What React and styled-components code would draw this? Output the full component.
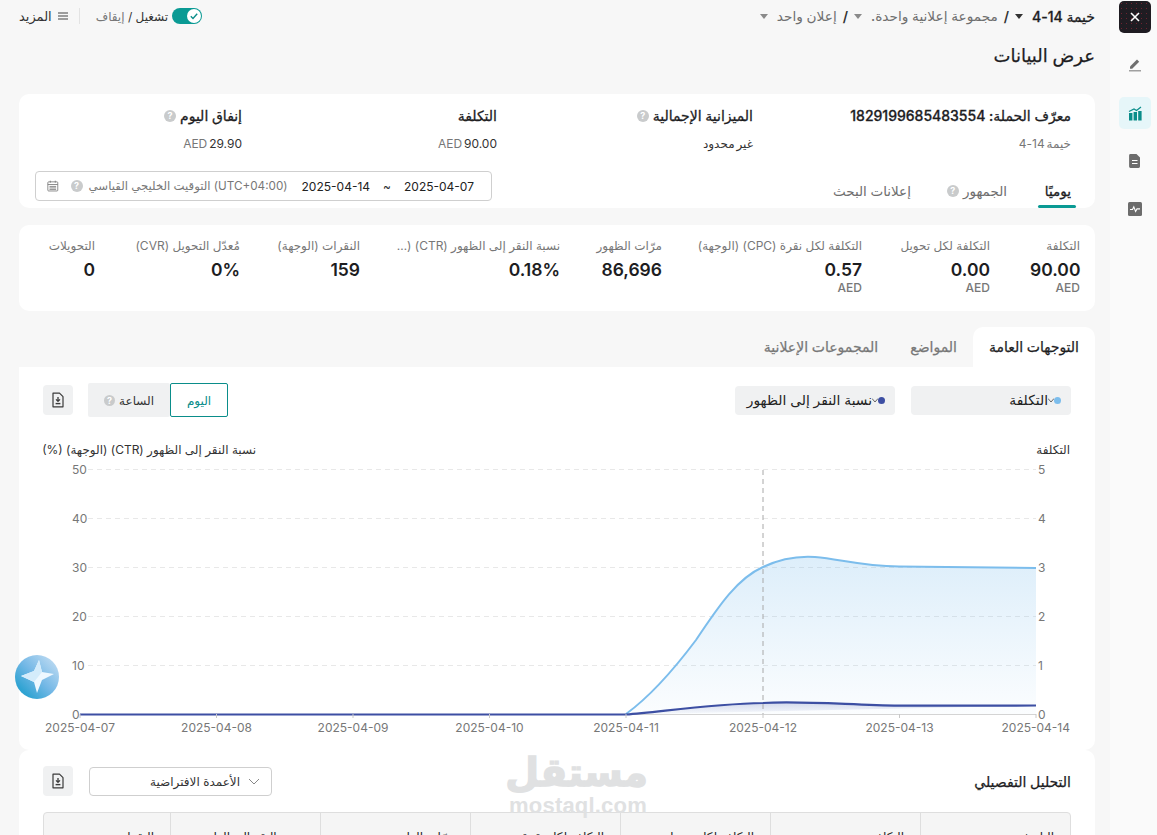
import React from 'react';
import styled, { createGlobalStyle } from 'styled-components';

const Global = createGlobalStyle`
  html, body { margin: 0; padding: 0; height: 835px; overflow: hidden; background: #f7f7f7; }
  body { font-family: Inter, "Noto Sans", "DejaVu Sans", sans-serif; color: #1d1d1f; }
  * { box-sizing: border-box; }
`;
const Shell = styled.div`
  direction: rtl; display: flex; width: 1157px; height: 835px; overflow: hidden; position: relative;
`;
const Side = styled.aside`
  width: 47px; flex: none; background: #fafafa; padding: 1px 6px 0 9px;
  display: flex; flex-direction: column; align-items: center;
`;
const CloseBtn = styled.button`
  width: 32px; height: 32px; border: 0; border-radius: 5px; padding: 0; display: grid; place-items: center;
  background-color: #1f1c22;
  background-image: radial-gradient(#6e2230 0.6px, transparent 0.8px);
  background-size: 5px 5px;
`;
const SideItem = styled.div`
  width: 32px; height: 32px; border-radius: 5px; display: grid; place-items: center; flex: none;
  margin-top: 16px; background: ${p => (p.$active ? '#e6f6f9' : 'transparent')};
`;
const Main = styled.main`
  width: 1110px; flex: none; padding: 0 15px 0 19px; display: flex; flex-direction: column;
  & > * { flex: none; }
`;
const TopBar = styled.header`
  height: 32px; display: flex; justify-content: space-between; align-items: center; font-size: 14px;
`;
const Crumbs = styled.nav`display: flex; align-items: center; gap: 6px;`;
const Crumb = styled.span`
  font-weight: 500; color: ${p => (p.$strong ? '#1d1d1f' : '#6f6f6f')}; white-space: nowrap;
  ${p => (p.$strong ? '-webkit-text-stroke: 0.3px currentColor;' : 'font-size: 13.7px;')}
`;
const Sep = styled.span`font-weight: 600; color: #333;`;
const Caret = styled.i`
  width: 0; height: 0; border-left: 4.5px solid transparent; border-right: 4.5px solid transparent; margin-right: 3px;
  border-top: 5px solid ${p => p.$c || '#8a8a8a'}; display: inline-block;
`;
const Actions = styled.div`display: flex; align-items: center;`;
const Toggle = styled.span`
  width: 30px; height: 16px; border-radius: 8px; background: #0a9a94; position: relative; display: block; margin-left: 4px;
`;
const Knob = styled.span`
  position: absolute; right: 1px; top: 1px; width: 14px; height: 14px; border-radius: 50%; background: #fff;
  display: grid; place-items: center;
`;
const ToggleText = styled.span`font-size: 12px; color: #333; white-space: nowrap;`;
const Muted = styled.span`color: #777;`;
const Divider = styled.span`width: 1px; height: 16px; background: #e3e3e3; margin: 0 16px 0 11px;`;
const More = styled.span`display: flex; align-items: center; gap: 6px; font-size: 13px; color: #333; white-space: nowrap;`;
const Title = styled.h1`
  margin: 11px 0 0; height: 26px; font-size: 18px; line-height: 26px; font-weight: 500; -webkit-text-stroke: 0.25px currentColor;
`;
const Card = styled.section`
  background: #fff; border-radius: 10px; margin-top: ${p => p.$mt || 0}px;
`;
const InfoCard = styled(Card)`height: 114px; padding: 12px 24px 0 16px; position: relative;`;
const InfoRow = styled.div`display: flex; height: 58px;`;
const InfoCol = styled.div`width: ${p => p.$w}px; flex: none;`;
const InfoLabel = styled.div`
  font-size: 14px; line-height: 20px; font-weight: 500; display: flex; align-items: center; gap: 4px; white-space: nowrap;
  -webkit-text-stroke: 0.3px currentColor;
`;
const InfoValue = styled.div`
  margin-top: 9px; font-size: 12px; line-height: 18px; word-spacing: -1.5px; color: ${p => (p.$soft ? '#777' : '#333')};
`;
const Aed = styled.span`color: #777;`;
const Help = styled.span`
  width: ${p => p.$s || 12}px; height: ${p => p.$s || 12}px; border-radius: 50%; background: #c9cbcc; color: #fff;
  font-size: ${p => (p.$s ? p.$s - 2 : 9)}px; line-height: ${p => p.$s || 12}px; text-align: center; font-weight: 700; flex: none; display: inline-block;
  -webkit-text-stroke: 0; font-family: Inter, sans-serif;
`;
const TabRow = styled.div`display: flex; justify-content: space-between; align-items: flex-start; margin-top: 7px;`;
const SubTabs = styled.div`display: flex; gap: 36px; height: 31px; padding-top: 9px;`;
const SubTab = styled.div`
  position: relative; font-size: 13.5px; line-height: 20px; display: flex; align-items: center; gap: 4px; white-space: nowrap;
  font-weight: 500; color: ${p => (p.$active ? '#1d1d1f' : '#6f6f6f')};
  ${p => p.$active && `-webkit-text-stroke: 0.3px currentColor; min-width: 28px;
    &::after { content: ''; position: absolute; left: -5px; right: -5px; top: 25px; height: 3px; border-radius: 2px; background: #0a9a94; }`}
`;
const DateBox = styled.div`
  width: 457px; height: 30px; border: 1px solid #cfcfcf; border-radius: 4px; display: flex; align-items: center;
  padding: 0 17px 0 11px; font-size: 12px; white-space: nowrap;
`;
const DateText = styled.span`direction: ltr; color: #222; font-size: 12px;`;
const Tilde = styled.span`margin: 0 13px; color: #333;`;
const Tz = styled.span`margin: 0 14px 0 12px; color: #777; font-size: 11.7px; display: flex; gap: 6px; align-items: center;`;
const Stats = styled(Card)`height: 86px; padding: 12px 15px 0 0; display: flex; gap: 40px;`;
const Stat = styled.div`flex: none; display: flex; flex-direction: column; width: ${p => p.$w}px;`;
const StatLabel = styled.div`font-size: 12px; line-height: 18px; color: #777; white-space: nowrap;`;
const StatValue = styled.div`font-size: 17.5px; font-weight: 600; line-height: 24px; margin-top: 3px; direction: ltr; text-align: right;`;
const StatUnit = styled.div`font-size: 12px; line-height: 14px; margin-top: -1px; color: #777; font-weight: 500;`;
const Tabs = styled.div`display: flex; height: 40px; margin-top: 16px; align-items: stretch;`;
const Tab = styled.div`
  padding: 0 16px; border-radius: 10px 10px 0 0; font-size: 14px; line-height: 40px; white-space: nowrap; font-weight: 500;
  -webkit-text-stroke: 0.25px currentColor;
  background: ${p => (p.$active ? '#fff' : 'transparent')}; color: ${p => (p.$active ? '#1d1d1f' : '#777')};
`;
const ChartCard = styled(Card)`height: 383px; border-radius: 0 0 10px 10px; padding-top: 16px;`;
const Controls = styled.div`display: flex; justify-content: space-between; align-items: center; padding: 0 24px; height: 34px;`;
const Metrics = styled.div`display: flex; gap: 16px;`;
const Metric = styled.div`
  width: 160px; height: 29px; border-radius: 4px; background: #f0f1f2; display: flex; align-items: center; padding: 0 10px 0 0;
  font-size: 13.8px; white-space: nowrap; color: #222;
`;
const Dot = styled.span`width: 7px; height: 7px; border-radius: 50%; background: ${p => p.$c}; flex: none;`;
const Right = styled.div`display: flex; align-items: center; gap: ${p => p.$gap}px;`;
const Segments = styled.div`display: flex; height: 34px;`;
const Segment = styled.div`
  font-size: 12px; display: flex; align-items: center; gap: 4px; justify-content: center;
  width: ${p => p.$w}px; border-radius: 2px;
  ${p => (p.$active
    ? 'border: 1px solid #0a8d8a; color: #0a8d8a; background: #fff;'
    : 'background: #f0f1f2; color: #333;')}
`;
const IconBtn = styled.div`
  width: 30px; height: 30px; border-radius: 4px; background: #f0f1f2; display: grid; place-items: center; flex: none;
`;
const ChartSvg = styled.svg`display: block; margin-top: 23px; overflow: visible;`;
const AxisText = styled.text`font-family: Inter, sans-serif; font-size: 12px; fill: #777; direction: ltr;`;
const AxisTitle = styled.text`font-size: 12px; fill: #333;`;
const DetailCard = styled(Card)`
  height: 120px; padding: 16px 24px 0; border-radius: 10px 10px 0 0; position: relative;
`;
const DetailHead = styled.div`display: flex; justify-content: space-between; align-items: center; height: 30px;`;
const DetailTitle = styled.div`font-size: 14px; font-weight: 500; -webkit-text-stroke: 0.25px currentColor;`;
const ColumnSelect = styled.div`
  width: 183px; height: 29px; border: 1px solid #cfcfcf; border-radius: 4px; display: flex; align-items: center;
  padding: 0 11px 0 0; gap: 8px; font-size: 12px; color: #333; white-space: nowrap;
`;
const Table = styled.div`
  display: grid; grid-template-columns: 150px 150px 150px 150px 150px 150px 125px; margin-top: 16px;
  border: 1px solid #dedede; border-radius: 4px 4px 0 0; overflow: hidden; background: #f5f5f5;
`;
const Th = styled.div`
  height: 60px; padding: 15px 16px 0; font-size: 12px; line-height: 18px; font-weight: 500; white-space: nowrap; overflow: hidden;
  border-left: ${p => (p.$last ? '0' : '1px solid #dedede')};
`;
const Water = styled.div`
  position: absolute; left: 489px; top: 0; width: 140px; text-align: center; color: #e0e1e2; pointer-events: none; direction: ltr;
`;
const WaterAr = styled.div`font-family: "DejaVu Sans", sans-serif; font-size: 39px; font-weight: 700; line-height: 46px; direction: rtl; -webkit-text-stroke: 1.5px currentColor; white-space: nowrap;`;
const WaterEn = styled.div`font-family: "Liberation Sans", sans-serif; font-size: 22px; font-weight: 700; line-height: 20px; letter-spacing: .2px;`;
const Bubble = styled.div`
  position: absolute; left: 15px; top: 655px; width: 44px; height: 44px; border-radius: 50%;
  background: linear-gradient(225deg, #cfe3f5 0%, #74b8e6 50%, #2fa3d2 82%);
`;

const ExportIcon = () => (
  <svg width="14" height="16" viewBox="0 0 14 16" fill="none">
    <path d="M2 1.2h6.5L12 4.7V14.8H2z" stroke="#3a3a3a" strokeWidth="1.2" strokeLinejoin="round" />
    <path d="M7 5v4.2M5 7.4l2 2 2-2" stroke="#3a3a3a" strokeWidth="1.3" />
    <path d="M4.6 11.6h4.8" stroke="#3a3a3a" strokeWidth="1.4" />
  </svg>
);
const CalendarIcon = () => (
  <svg width="14" height="14" viewBox="0 0 14 14" fill="none" stroke="#777" strokeWidth="1">
    <rect x="1" y="2" width="12" height="11" rx="1" />
    <path d="M1 5.2h12M4 .6v2.4M10 .6v2.4M3 7.5h8M3 9.3h8M3 11.1h8" />
  </svg>
);
const MiniChevron = () => (
  <svg width="6" height="5" viewBox="0 0 6 5"><path d="M0 .5l3 3.5 3-3.5" fill="none" stroke="#555" strokeWidth="0.9" /></svg>
);

const metrics = [
  { label: 'التكلفة', value: '90.00', unit: 'AED', w: 50 },
  { label: 'التكلفة لكل تحويل', value: '0.00', unit: 'AED', w: 88 },
  { label: 'التكلفة لكل نقرة (CPC) (الوجهة)', value: '0.57', unit: 'AED', w: 160 },
  { label: 'مرّات الظهور', value: '86,696', w: 62 },
  { label: 'نسبة النقر إلى الظهور (CTR) (…', value: '0.18%', w: 160 },
  { label: 'النقرات (الوجهة)', value: '159', w: 80 },
  { label: 'مُعدّل التحويل (CVR)', value: '0%', w: 105 },
  { label: 'التحويلات', value: '0', w: 46 },
];
const xTicks = [
  [80, '2025-04-07'], [216.5, '2025-04-08'], [353, '2025-04-09'], [489.5, '2025-04-10'],
  [626, '2025-04-11'], [763, '2025-04-12'], [899.5, '2025-04-13'], [1036, '2025-04-14'],
];
const yTicks = [0, 1, 2, 3, 4, 5];
const yAt = i => 714 - i * 49;
const costPath = 'M626 714 C648 698 672 672 696 640 C720 604 738 578 763 567 C782 558 800 556 815 557 C840 559 860 566 899 566.5 L1036 568';
const ctrPath = 'M626 714.5 C660 712 710 704 763 703 C800 700.5 850 705 899 705.7 L1036 705.5';
const heads = ['التاريخ', 'التكلفة', 'التكلفة لكل تحويل', 'التكلفة لكل نقرة', 'مرّات الظهور', 'نسبة النقر إلى الظهور', 'النقرات'];

export default function App() {
  return (
    <Shell>
      <Global />
      <Side>
        <CloseBtn aria-label="close">
          <svg width="12" height="12" viewBox="0 0 12 12"><path d="M2 2l8 8M10 2l-8 8" stroke="#fff" strokeWidth="1.6" /></svg>
        </CloseBtn>
        <SideItem>
          <svg width="14" height="14" viewBox="0 0 14 14"><path d="M2 9.5L9 2.5l2.2 2.2-7 7H2z" fill="#6f6f6f" transform="translate(0,-1)" /><path d="M1 12.8h12" stroke="#8a8a8a" strokeWidth="1.2" /></svg>
        </SideItem>
        <SideItem $active>
          <svg width="15" height="15" viewBox="0 0 15 15" fill="#0a8d8a">
            <rect x="1" y="7" width="3.4" height="7.5" /><rect x="5.6" y="6" width="3.4" height="8.5" /><rect x="10.2" y="5" width="3.4" height="9.5" />
            <path d="M1 5.5L6 3l2.5 1.5L13 1" fill="none" stroke="#0a8d8a" strokeWidth="1.2" />
          </svg>
        </SideItem>
        <SideItem>
          <svg width="12" height="14" viewBox="0 0 12 14"><path d="M1.5 0h6L11 3.5V12.6A1.4 1.4 0 0 1 9.6 14H1.5A1.4 1.4 0 0 1 .1 12.6V1.4A1.4 1.4 0 0 1 1.5 0z" fill="#6c6c6c" /><path d="M3 6.5h5.5M3 9.5h5.5" stroke="#fff" strokeWidth="1.2" /></svg>
        </SideItem>
        <SideItem>
          <svg width="14" height="14" viewBox="0 0 14 14"><rect width="14" height="14" rx="1.5" fill="#6c6c6c" /><path d="M2 7.5h2.5l1.3-2.6 1.8 4.6 1.4-2.6H12" fill="none" stroke="#fff" strokeWidth="1.1" /></svg>
        </SideItem>
      </Side>
      <Main>
        <TopBar>
          <Crumbs>
            <Crumb $strong>خيمة 14-4</Crumb><Caret $c="#333" /><Sep>/</Sep>
            <Crumb>مجموعة إعلانية واحدة.</Crumb><Caret /><Sep>/</Sep>
            <Crumb>إعلان واحد</Crumb><Caret />
          </Crumbs>
          <Actions>
            <Toggle>
              <Knob>
                <svg width="10" height="10" viewBox="0 0 10 10"><path d="M1.8 5.2l2.2 2.2 4.2-4.6" fill="none" stroke="#0a8d8a" strokeWidth="1.4" /></svg>
              </Knob>
            </Toggle>
            <ToggleText>تشغيل / <Muted>إيقاف</Muted></ToggleText>
            <Divider />
            <More>
              <svg width="10" height="8" viewBox="0 0 10 8"><path d="M0 1h10M0 4h10M0 7h10" stroke="#444" strokeWidth="1.1" /></svg>
              المزيد
            </More>
          </Actions>
        </TopBar>
        <Title>عرض البيانات</Title>
        <InfoCard $mt={25}>
          <InfoRow>
            <InfoCol $w={318}>
              <InfoLabel>معرّف الحملة: 1829199685483554</InfoLabel>
              <InfoValue $soft>خيمة 14-4</InfoValue>
            </InfoCol>
            <InfoCol $w={256}>
              <InfoLabel>الميزانية الإجمالية <Help>?</Help></InfoLabel>
              <InfoValue>غير محدود</InfoValue>
            </InfoCol>
            <InfoCol $w={255}>
              <InfoLabel>التكلفة</InfoLabel>
              <InfoValue><Aed>AED</Aed> 90.00</InfoValue>
            </InfoCol>
            <InfoCol $w={199}>
              <InfoLabel>إنفاق اليوم <Help>?</Help></InfoLabel>
              <InfoValue><Aed>AED</Aed> 29.90</InfoValue>
            </InfoCol>
          </InfoRow>
          <TabRow>
            <SubTabs>
              <SubTab $active>يوميًا</SubTab>
              <SubTab>الجمهور <Help>?</Help></SubTab>
              <SubTab>إعلانات البحث</SubTab>
            </SubTabs>
            <DateBox>
              <DateText>2025-04-07</DateText>
              <Tilde>~</Tilde>
              <DateText>2025-04-14</DateText>
              <Tz>(UTC+04:00) التوقيت الخليجي القياسي <Help>?</Help></Tz>
              <CalendarIcon />
            </DateBox>
          </TabRow>
        </InfoCard>
        <Stats $mt={17}>
          {metrics.map(m => (
            <Stat key={m.label} $w={m.w}>
              <StatLabel>{m.label}</StatLabel>
              <StatValue>{m.value}</StatValue>
              {m.unit && <StatUnit>{m.unit}</StatUnit>}
            </Stat>
          ))}
        </Stats>
        <Tabs>
          <Tab $active>التوجهات العامة</Tab>
          <Tab>المواضع</Tab>
          <Tab>المجموعات الإعلانية</Tab>
        </Tabs>
        <ChartCard>
          <Controls>
            <Metrics>
              <Metric><Dot $c="#7cbdec" /><MiniChevron />التكلفة</Metric>
              <Metric><Dot $c="#3d4fa3" /><MiniChevron />نسبة النقر إلى الظهور</Metric>
            </Metrics>
            <Right $gap={15}>
              <Segments>
                <Segment $active $w={58}>اليوم</Segment>
                <Segment $w={82}>الساعة <Help $s={11}>?</Help></Segment>
              </Segments>
              <IconBtn><ExportIcon /></IconBtn>
            </Right>
          </Controls>
          <ChartSvg width="1076" height="305" viewBox="19 440 1076 305">
            <defs>
              <linearGradient id="costFill" x1="0" y1="0" x2="0" y2="1">
                <stop offset="0" stopColor="#7cbdec" stopOpacity="0.26" />
                <stop offset="1" stopColor="#7cbdec" stopOpacity="0.03" />
              </linearGradient>
              <linearGradient id="ctrFill" x1="0" y1="0" x2="0" y2="1">
                <stop offset="0" stopColor="#3d4fa3" stopOpacity="0.2" />
                <stop offset="1" stopColor="#3d4fa3" stopOpacity="0.02" />
              </linearGradient>
            </defs>
            <AxisTitle x="1070" y="454" textAnchor="start">التكلفة</AxisTitle>
            <AxisTitle x="256" y="454" textAnchor="start">نسبة النقر إلى الظهور (CTR) (الوجهة) (%)</AxisTitle>
            {yTicks.map(i => (
              <g key={i}>
                {i > 0 && <line x1="88" x2="1036" y1={yAt(i) + 0.5} y2={yAt(i) + 0.5} stroke="#e8e8e8" strokeDasharray="5 4" />}
                <AxisText x="72" y={yAt(i) + 4.5}>{i * 10}</AxisText>
                <AxisText x="1038" y={yAt(i) + 4.5}>{i}</AxisText>
              </g>
            ))}
            <line x1="80" x2="1036" y1="714.5" y2="714.5" stroke="#d4d4d4" />
            <path d={`${costPath} L1036 714 Z`} fill="url(#costFill)" />
            <path d={`${ctrPath} L626 714.5 Z`} fill="url(#ctrFill)" />
            <line x1="763" x2="763" y1="470" y2="714" stroke="#a8a8a8" strokeDasharray="5 4" />
            <path d={costPath} fill="none" stroke="#7cbdec" strokeWidth="2" />
            <path d="M80 714.5 H626" stroke="#3d4fa3" strokeWidth="2.2" />
            <path d={ctrPath} fill="none" stroke="#3d4fa3" strokeWidth="2.2" />
            {xTicks.map(([x, t], idx) => (
              <g key={t}>
                <line x1={x} x2={x} y1="714" y2="718" stroke="#c8c8c8" />
                <AxisText x={idx === 0 ? 45 : idx === 7 ? 1070 : x} y="732" textAnchor={idx === 0 ? 'start' : idx === 7 ? 'end' : 'middle'}>{t}</AxisText>
              </g>
            ))}
          </ChartSvg>
        </ChartCard>
        <DetailCard>
          <DetailHead>
            <DetailTitle>التحليل التفصيلي</DetailTitle>
            <Right $gap={16}>
              <ColumnSelect>
                <svg width="12" height="7" viewBox="0 0 12 7"><path d="M1 1l5 5 5-5" fill="none" stroke="#888" /></svg>
                الأعمدة الافتراضية
              </ColumnSelect>
              <IconBtn><ExportIcon /></IconBtn>
            </Right>
          </DetailHead>
          <Table>
            {heads.map((h, i) => <Th key={h} $last={i === heads.length - 1}>{h}</Th>)}
          </Table>
          <Water>
            <WaterAr>مستقل</WaterAr>
            <WaterEn>mostaql.com</WaterEn>
          </Water>
        </DetailCard>
      </Main>
      <Bubble>
        <svg width="44" height="44" viewBox="0 0 44 44">
          <path d="M24 5L27 17 39 19 27 25 22 38 19 27 6 21 19 16Z" fill="#eef8ff" />
          <path d="M24 5L27 17 19 27 6 21 19 16Z" fill="#d4ecfb" />
        </svg>
      </Bubble>
    </Shell>
  );
}
